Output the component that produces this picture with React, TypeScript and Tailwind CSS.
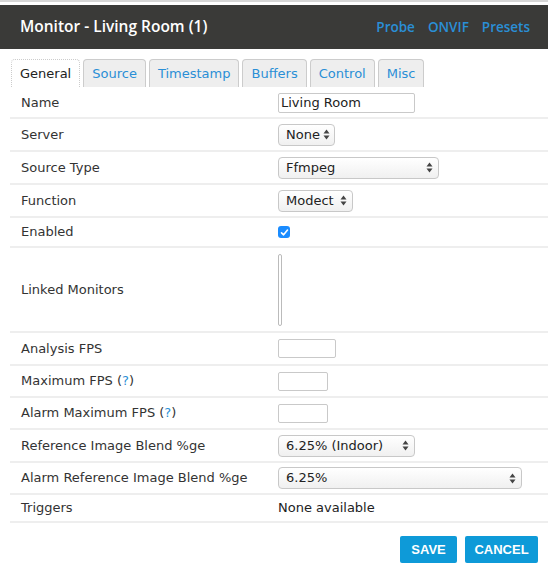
import React from 'react';

const TABS = ['General', 'Source', 'Timestamp', 'Buffers', 'Control', 'Misc'];

function Arrows() {
  return (
    <svg width="7" height="11" viewBox="0 0 7 11" className="shrink-0">
      <path d="M3.5 0.5 L6.5 4.5 L0.5 4.5 Z" fill="#444" />
      <path d="M3.5 10.5 L6.5 6.5 L0.5 6.5 Z" fill="#444" />
    </svg>
  );
}

function Select({ value, width }: { value: string; width: string }) {
  return (
    <div className={`${width} h-[22px] flex items-center justify-between gap-[3px] pl-[7px] pr-[5px] rounded-[4px] border border-[#c8c8c8] bg-gradient-to-b from-[#ffffff] to-[#f0f0f0] text-[#222]`}>
      <span className="whitespace-nowrap">{value}</span>
      <Arrows />
    </div>
  );
}

function TextBox({ value = '', width, h = 'h-[19px]' }: { value?: string; width: string; h?: string }) {
  return (
    <div className={`${width} ${h} flex items-center px-[2px] border border-[#c9c9c9] rounded-[2px] bg-white text-[#222]`}>
      {value}
    </div>
  );
}

function Help() {
  return <>(<span className="text-[#2a8fd6]">?</span>)</>;
}

const ROWS: { label: React.ReactNode; h: string; value: React.ReactNode }[] = [
  { label: 'Name', h: 'h-[31px]', value: <TextBox value="Living Room" width="w-[137px]" h="h-[20px]" /> },
  { label: 'Server', h: 'h-[33px]', value: <Select value="None" width="w-[57px]" /> },
  { label: 'Source Type', h: 'h-[33px]', value: <Select value="Ffmpeg" width="w-[161px]" /> },
  { label: 'Function', h: 'h-[33px]', value: <Select value="Modect" width="w-[75px]" /> },
  {
    label: 'Enabled',
    h: 'h-[30px]',
    value: (
      <div className="w-[12px] h-[12px] rounded-[3px] bg-[#1a8cff] flex items-center justify-center">
        <svg width="9" height="9" viewBox="0 0 9 9">
          <path d="M1.5 4.8 L3.6 6.8 L7.5 2" stroke="white" strokeWidth="1.6" fill="none" strokeLinecap="round" strokeLinejoin="round" />
        </svg>
      </div>
    ),
  },
  {
    label: 'Linked Monitors',
    h: 'h-[85px]',
    value: <div className="w-[4px] h-[72px] border border-[#bbb] rounded-[2px] bg-white" />,
  },
  { label: 'Analysis FPS', h: 'h-[33px]', value: <TextBox width="w-[58px]" /> },
  { label: <>Maximum FPS <Help /></>, h: 'h-[32px]', value: <TextBox width="w-[50px]" /> },
  { label: <>Alarm Maximum FPS <Help /></>, h: 'h-[32px]', value: <TextBox width="w-[50px]" /> },
  { label: 'Reference Image Blend %ge', h: 'h-[33px]', value: <Select value="6.25% (Indoor)" width="w-[137px]" /> },
  { label: 'Alarm Reference Image Blend %ge', h: 'h-[32px]', value: <Select value="6.25%" width="w-[244px]" /> },
  { label: 'Triggers', h: 'h-[28px]', value: <span className="text-[#222]">None available</span> },
];

export default function App() {
  return (
    <div className="w-[548px] h-[581px] bg-white overflow-hidden text-[13px] text-[#333]" style={{ fontFamily: 'Verdana, "DejaVu Sans", sans-serif' }}>
      {/* top edge */}
      <div className="h-[5px] border-t-[2px] border-[#d6d6d6] bg-white" />

      {/* Header */}
      <div className="h-[44px] bg-[#3a3a38] flex items-center justify-between pl-[20px] pr-[18px]" style={{ fontFamily: '"Open Sans", sans-serif' }}>
        <div className="text-white text-[15.5px] font-semibold">Monitor - Living Room (1)</div>
        <div className="flex gap-[13px] text-[#2a8fd6] text-[13.5px] font-semibold">
          <span>Probe</span>
          <span>ONVIF</span>
          <span>Presets</span>
        </div>
      </div>

      {/* Tabs */}
      <div className="flex gap-[3px] pl-[11px] pt-[10px]">
        {TABS.map((t, i) => (
          <div key={t}
            className={`h-[28px] px-[8px] flex items-center rounded-t-[4px] border border-b-0 border-[#cccccc] ${i === 0 ? 'bg-white text-[#222] border-b border-b-[#7b7bd0] border-dotted' : 'bg-[#eeeeee] text-[#2a8fd6]'}`}>
            {t}
          </div>
        ))}
      </div>

      {/* Form rows */}
      <div className="ml-[10px] mt-[1px]">
        {ROWS.map((r, i) => (
          <div key={i} className={`${r.h} flex items-center border-b-2 border-[#eeeeee]`}>
            <div className="w-[268px] pl-[11px]">{r.label}</div>
            <div className="flex-1 flex items-center">{r.value}</div>
          </div>
        ))}
      </div>

      {/* Buttons */}
      <div className="flex justify-end gap-[8px] pr-[10px] mt-[13px]" style={{ fontFamily: '"Liberation Sans", Arial, sans-serif' }}>
        <button className="h-[27px] w-[57px] bg-[#0e9ad8] text-white font-bold text-[13px] rounded-[2px]">SAVE</button>
        <button className="h-[27px] w-[73px] bg-[#0e9ad8] text-white font-bold text-[13px] rounded-[2px]">CANCEL</button>
      </div>
    </div>
  );
}
